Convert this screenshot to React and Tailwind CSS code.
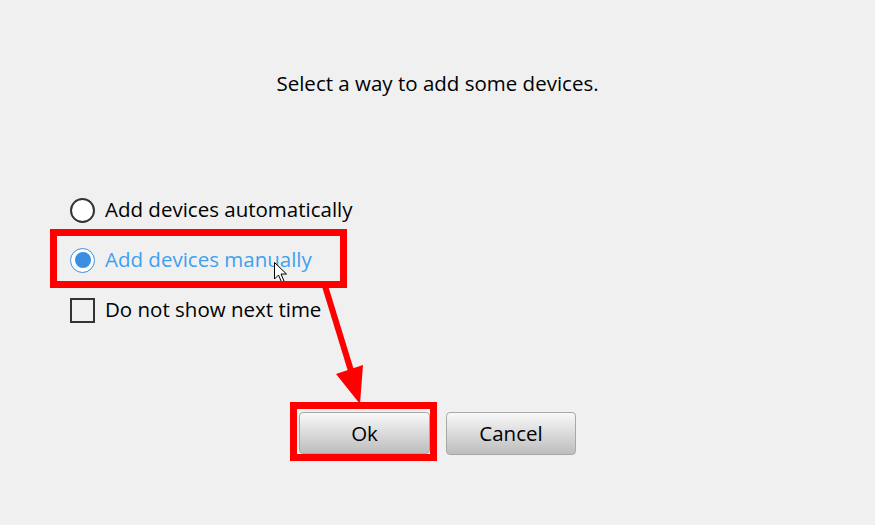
export default function App() {
  const font = { fontFamily: '"Open Sans", "Noto Sans", sans-serif' };
  return (
    <div className="relative w-[875px] h-[525px] bg-[#f0f0f0] overflow-hidden flex flex-col text-black" style={font}>
      <div className="pt-[69px] text-center text-[20.5px] leading-[28px]">Select a way to add some devices.</div>

      <div className="mt-[88px] flex flex-col pl-[70px]">
        <div className="h-[50px] flex items-center gap-[10px]">
          <div className="w-[25px] h-[25px] rounded-full border-2 border-[#333] bg-white" />
          <span className="text-[20.5px] leading-[28px] mb-[2px]">Add devices automatically</span>
        </div>
        <div className="h-[50px] flex items-center gap-[10px]">
          <div className="w-[25px] h-[25px] rounded-full border-[1.5px] border-[#3a92e4] bg-white flex items-center justify-center">
            <div className="w-[16px] h-[16px] rounded-full bg-[#3a8fe2]" />
          </div>
          <span className="text-[20.5px] leading-[28px] mb-[2px] text-[#3fa0f0]">Add devices manually</span>
        </div>
        <div className="h-[50px] flex items-center gap-[10px]">
          <div className="w-[25px] h-[25px] border-2 border-[#333] bg-[#f0f0f0]" />
          <span className="text-[20.5px] leading-[28px] mb-[2px]">Do not show next time</span>
        </div>
      </div>

      <div className="mt-[77px] flex justify-center gap-[16px]">
        <button className="w-[131px] h-[42px] rounded-[4px] border border-[#a8a8a8] bg-gradient-to-b from-[#f9f9f9] to-[#bdbdbd] text-[20.5px] text-black">Ok</button>
        <button className="w-[130px] h-[43px] rounded-[4px] border border-[#a8a8a8] bg-gradient-to-b from-[#f9f9f9] to-[#bdbdbd] text-[20.5px] text-black">Cancel</button>
      </div>

      {/* cursor */}
      <svg className="absolute left-[274px] top-[262px]" width="14" height="22" viewBox="0 0 14 22">
        <path d="M0.5 0.5 L0.5 17 L4.5 13 L7.5 20 L10 19 L7 12 L12.5 12 Z" fill="white" stroke="black" strokeWidth="1" />
      </svg>

      {/* annotations */}
      <div className="absolute left-[50px] top-[229px] w-[297px] h-[59px] border-[7px] border-[#ff0000]" />
      <div className="absolute left-[290px] top-[402px] w-[147px] h-[59px] border-[7px] border-[#ff0000]" />
      <svg className="absolute left-0 top-0" width="875" height="525" viewBox="0 0 875 525">
        <line x1="325" y1="286" x2="352" y2="374" stroke="#ff0000" strokeWidth="6" />
        <polygon points="336,374 363,365 360,404" fill="#ff0000" />
      </svg>
    </div>
  );
}
